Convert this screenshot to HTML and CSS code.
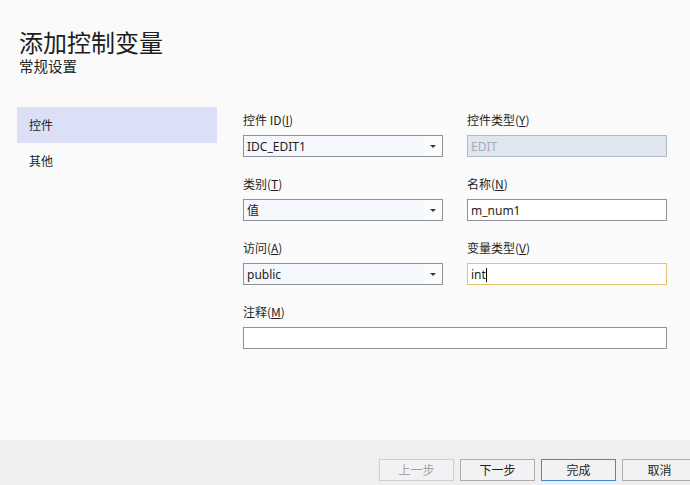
FILE: index.html
```html
<!DOCTYPE html>
<html lang="zh-CN">
<head>
<meta charset="utf-8">
<title>添加控制变量</title>
<link rel="stylesheet" href="styles.css">
</head>
<body>
<div class="page">
  <div class="header">
    <div class="title">添加控制变量</div>
    <div class="subtitle">常规设置</div>
  </div>
  <div class="main">
    <div class="sidebar">
      <div class="nav-item active">控件</div>
      <div class="nav-item">其他</div>
    </div>
    <div class="form">
      <div class="field">
        <div class="label">控件 ID(<u>I</u>)</div>
        <div class="combo"><span class="combo-text">IDC_EDIT1</span><span class="combo-btn"><span class="arrow"></span></span></div>
      </div>
      <div class="field">
        <div class="label">控件类型(<u>Y</u>)</div>
        <div class="input disabled">EDIT</div>
      </div>
      <div class="field">
        <div class="label">类别(<u>T</u>)</div>
        <div class="combo"><span class="combo-text">值</span><span class="combo-btn"><span class="arrow"></span></span></div>
      </div>
      <div class="field">
        <div class="label">名称(<u>N</u>)</div>
        <div class="input">m_num1</div>
      </div>
      <div class="field">
        <div class="label">访问(<u>A</u>)</div>
        <div class="combo"><span class="combo-text">public</span><span class="combo-btn"><span class="arrow"></span></span></div>
      </div>
      <div class="field">
        <div class="label">变量类型(<u>V</u>)</div>
        <div class="input focus">int<span class="caret"></span></div>
      </div>
      <div class="field wide">
        <div class="label">注释(<u>M</u>)</div>
        <div class="input"></div>
      </div>
    </div>
  </div>
  <div class="footer">
    <div class="btn disabled">上一步</div>
    <div class="btn">下一步</div>
    <div class="btn primary">完成</div>
    <div class="btn">取消</div>
  </div>
</div>
</body>
</html>
```

FILE: styles.css
```css
html, body {
  margin: 0;
  padding: 0;
}
body {
  background: #fafafb;
  color: #1e1e1e;
  font-family: "Noto Sans", "Noto Sans CJK SC", sans-serif;
  font-size: 12px;
  overflow: hidden;
}
.page {
  width: 690px;
  height: 485px;
  display: flex;
  flex-direction: column;
}
.header {
  padding: 29px 0 0 19px;
  height: 79px;
  box-sizing: border-box;
}
.title {
  font-family: "Noto Sans CJK SC", sans-serif;
  font-size: 24px;
  line-height: 26px;
  color: #1e1e1e;
}
.subtitle {
  font-family: "Noto Sans CJK SC", sans-serif;
  font-size: 14.5px;
  line-height: 20px;
  margin-top: 1px;
  color: #1e1e1e;
}
.main {
  flex: 1;
  display: flex;
  padding-top: 28px;
}
.sidebar {
  margin-left: 17px;
  width: 200px;
}
.nav-item {
  height: 36px;
  line-height: 36px;
  padding-left: 12px;
  font-family: "Noto Sans CJK SC", sans-serif;
  font-size: 12px;
}
.nav-item.active {
  background: #dbe0f7;
}
.form {
  margin-left: 26px;
  width: 424px;
  display: grid;
  grid-template-columns: 200px 200px;
  column-gap: 24px;
  row-gap: 17px;
  align-content: start;
  padding-top: 3px;
}
.field.wide {
  grid-column: 1 / 3;
}
.label {
  height: 20px;
  line-height: 20px;
  margin-bottom: 5px;
  font-family: "Noto Sans CJK SC", sans-serif;
  font-size: 12px;
}
.label u {
  text-underline-offset: 1px;
}
.input, .combo {
  box-sizing: border-box;
  height: 22px;
  border: 1px solid #8e929b;
  background: #ffffff;
  line-height: 21px;
  padding-left: 3px;
  font-size: 12px;
}
.input.disabled {
  background: #dfe6f0;
  border-color: #b2bac7;
  color: #a6acb4;
}
.input.focus {
  border-color: #e3c46e;
}
.caret {
  display: inline-block;
  width: 1px;
  height: 14px;
  background: #000;
  vertical-align: -3px;
}
.combo {
  display: flex;
  padding-left: 0;
  background: #f4f7fc;
}
.combo-text {
  flex: 1;
  padding-left: 3px;
}
.combo-btn {
  width: 18px;
  background: #fbfbfc;
  display: flex;
  align-items: center;
  justify-content: center;
}
.arrow {
  width: 0;
  height: 0;
  border-left: 3px solid transparent;
  border-right: 3px solid transparent;
  border-top: 3px solid #3a3a3a;
  margin-top: 1px;
}
.footer {
  height: 45px;
  background: #efeff2;
  display: flex;
  gap: 6px;
  padding: 19px 0 0 379px;
  box-sizing: border-box;
}
.btn {
  flex: none;
  box-sizing: border-box;
  width: 75px;
  height: 22px;
  line-height: 20px;
  border: 1px solid #adadad;
  background: #f2f2f4;
  text-align: center;
  font-family: "Noto Sans CJK SC", sans-serif;
  font-size: 12px;
  color: #1e1e1e;
}
.btn.disabled {
  border-color: #cfcfd1;
  color: #a2a2a2;
}
.btn.primary {
  border-color: #3f8bd5;
}
```
